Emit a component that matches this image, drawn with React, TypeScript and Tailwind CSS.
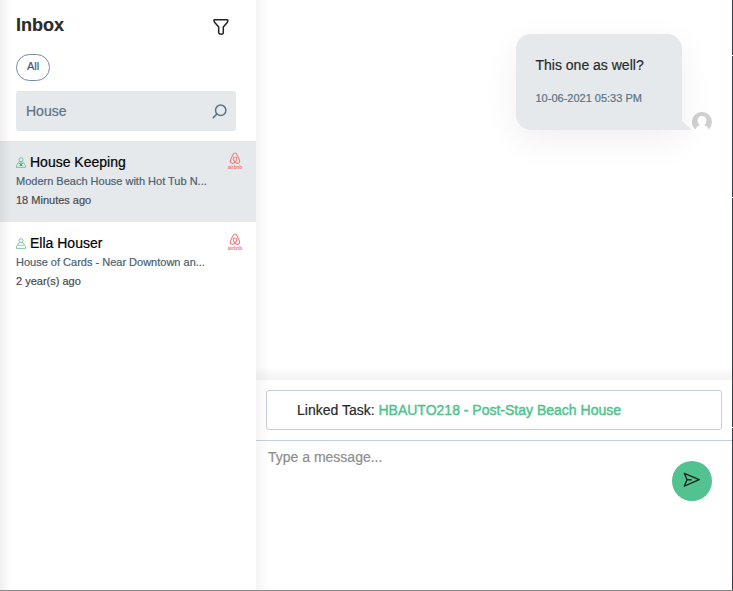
import React from "react";

function FilterIcon() {
  return (
    <svg width="16" height="17" viewBox="0 0 16 17" fill="none" stroke="#222" strokeWidth="1.5" strokeLinejoin="round">
      <path d="M1.2 1.7H14.6Q15.2 3.3 14.2 4.5L10.3 9.1V15Q10 16.1 8.4 16.2Q6 16.2 5.7 14.8V9.1L1.8 4.5Q.6 3.2 1.2 1.7Z" />
    </svg>
  );
}

function SearchIcon() {
  return (
    <svg width="15" height="15" viewBox="0 0 15 15" fill="none" stroke="#5b7383" strokeWidth="1.5" strokeLinecap="round">
      <circle cx="8.7" cy="6.3" r="5.2" />
      <path d="M4.9 10L1.3 13.6" />
    </svg>
  );
}

function GuestIcon({ checked }: { checked: boolean }) {
  return (
    <svg width="10" height="11" viewBox="0 0 10 11" fill="none" stroke="#5dbb85" strokeWidth=".8">
      <circle cx="5" cy="2.7" r="2" />
      <path d="M3.6 4.6Q1.8 5.2 1.7 7.2M6.4 4.6Q8.2 5.2 8.3 7.2M1.7 7.2L.5 8.2V10.4H9.5V8.2L8.3 7.2" />
      {checked ? <path d="M5 4.8V8.6M3 6L5 8L7 6M3.5 8.5H6.5" stroke="#2f9d60" /> : <path d="M2 7.4H8" strokeWidth=".6" />}
    </svg>
  );
}

function AirbnbLogo() {
  return (
    <svg width="16" height="18" viewBox="0 0 16 18" fill="none" stroke="#f0807f" strokeWidth="1.1">
      <path d="M8 10.2C5.6 7.4 5.6 5 8 5S10.4 7.4 8 10.2C6.2 12.2 3.3 11.4 3.3 9.2C3.3 8 5.9 2.6 6.7 1.6Q8 .5 9.3 1.6C10.1 2.6 12.7 8 12.7 9.2C12.7 11.4 9.8 12.2 8 10.2Z" />
      <text x=".7" y="17" textLength="14.8" fontFamily="Liberation Sans, sans-serif" fontSize="5.2" fontWeight="700" fill="#f0807f" stroke="none">airbnb</text>
    </svg>
  );
}

function SendIcon() {
  return (
    <svg width="18" height="16" viewBox="0 0 18 16" fill="none" stroke="#13291f" strokeWidth="1.35" strokeLinejoin="round">
      <path d="M1.3 1.3L16.2 7.6L1.3 14.2L4 7.7ZM4 7.7H8.7" />
    </svg>
  );
}

function Avatar() {
  return (
    <svg width="20" height="20" viewBox="0 0 20 20">
      <path fill="#d0d0d0" d="M3.4 17.5A10 10 0 1 1 16.6 17.5Q15.6 14.2 12.5 13.1Q14.5 11.2 14.5 8.4A4.5 4.5 0 0 0 5.5 8.4Q5.5 11.2 7.5 13.1Q4.4 14.2 3.4 17.5Z" />
    </svg>
  );
}

type ThreadProps = { name: string; listing: string; time: string; active?: boolean };

function Thread({ name, listing, time, active = false }: ThreadProps) {
  return (
    <div className={active ? "flex h-[81px] justify-between bg-[#e5e9ec] pr-[13px] pl-4" : "flex h-[81px] justify-between pr-[13px] pl-4"}>
      <div className="pt-3 whitespace-nowrap">
        <div className="flex h-[19px] items-center gap-1 text-[14px] text-black">
          <GuestIcon checked={active} />
          <span>{name}</span>
        </div>
        <div className="h-[19px] text-[11px] leading-[19px] text-[#4a6170]">{listing}</div>
        <div className="h-[19px] text-[11px] leading-[19px] text-[#4a4a4a]">{time}</div>
      </div>
      <div className="pt-[11px]"><AirbnbLogo /></div>
    </div>
  );
}

export default function App() {
  return (
    <div className="flex h-[591px] w-[733px] flex-col overflow-hidden bg-white font-['Liberation_Sans',Arial,sans-serif] [-webkit-text-stroke:0.2px_currentColor]">
      <div className="flex h-[590px]">
        <aside className="relative w-64 shrink-0">
          <header className="flex h-[54px] items-start justify-between pr-[27px] pl-4">
            <h1 className="pt-[13px] text-[18px] leading-6 font-bold text-[#2b2b2b]">Inbox</h1>
            <div className="pt-[18px]"><FilterIcon /></div>
          </header>
          <div className="flex h-[37px] pl-4">
            <button className="h-[27px] w-[34px] rounded-full border border-[#7688ad] pb-0.5 text-[11px] text-[#42547f] [-webkit-text-stroke:0.2px_currentColor]">All</button>
          </div>
          <div className="mx-4 mb-[10px] flex h-10 w-[220px] items-center justify-between rounded-[3px] bg-[#e5e9ec] pr-[9px] pl-[10px]">
            <span className="text-[14px] text-[#5b7383]">House</span>
            <SearchIcon />
          </div>
          <Thread active name="House Keeping" listing="Modern Beach House with Hot Tub N..." time="18 Minutes ago" />
          <Thread name="Ella Houser" listing="House of Cards - Near Downtown an..." time="2 year(s) ago" />
          <div className="absolute inset-y-0 left-0 w-[11px] bg-linear-to-r from-black/6 to-transparent" />
        </aside>

        <main className="relative flex w-[476px] shrink-0 flex-col">
          <section className="flex h-[380px] items-start justify-end overflow-hidden pt-[34px] pr-5">
            <div className="relative h-24 w-[166px] rounded-[15px] rounded-br-none bg-[#e5e9ec] pt-[21px] pl-[19.5px] whitespace-nowrap shadow-[0_10px_34px_rgba(0,0,0,0.065)]">
              <p className="text-[14px] leading-5 text-[#292929]">This one as well?</p>
              <p className="mt-[13px] text-[11px] leading-5 text-[#5b7383]">10-06-2021 05:33 PM</p>
              <div className="absolute bottom-0 left-full h-[9px] w-[10px] bg-[#e5e9ec] [clip-path:polygon(0_0,100%_100%,0_100%)]" />
            </div>
            <div className="mt-[78px] ml-[10px]"><Avatar /></div>
          </section>
          <div className="absolute top-[366px] h-[14px] w-full bg-linear-to-b from-transparent to-black/5" />
          <section className="h-[61px] border-b border-[#c7cfd6] px-[10px] pt-[10px]">
            <div className="flex h-10 items-center rounded-[3px] border border-[#c7cfd6] pl-[30px] text-[14px] whitespace-pre text-[#292929]">
              <span>Linked Task: </span>
              <a className="text-[#4fc38f] [-webkit-text-stroke:0.45px_#4fc38f]">HBAUTO218 - Post-Stay Beach House</a>
            </div>
          </section>
          <section className="flex justify-between pr-5 pl-3">
            <div className="pt-[6px] text-[14px] leading-5 text-[#8e8e8e]">Type a message...</div>
            <button className="mt-5 flex size-10 items-center justify-center rounded-full bg-[#52c290] pb-[2px]"><SendIcon /></button>
          </section>
          <div className="absolute inset-y-0 left-0 w-[14px] bg-linear-to-r from-black/4 to-transparent" />
        </main>

        <div className="flex w-px flex-col gap-px">
          <div className="h-[55px] bg-[#333e50]" />
          <div className="h-[141px] bg-[#333e50]" />
          <div className="h-[229px] bg-[#3a3e47]" />
          <div className="flex-1 bg-[#333e50]" />
        </div>
      </div>
      <div className="h-px bg-[#8a8a8a]" />
    </div>
  );
}
